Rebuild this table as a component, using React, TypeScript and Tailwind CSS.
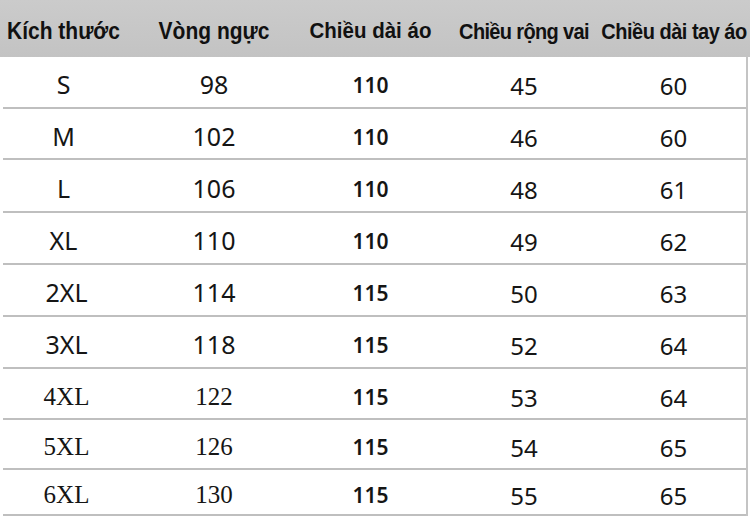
const COLS = [
  { label: "Kích thước", w: "w-[121px] shrink-0", head: "text-[21px]" },
  { label: "Vòng ngực", w: "w-[180px] shrink-0", head: "text-[21px]" },
  { label: "Chiều dài áo", w: "w-[133px] shrink-0", head: "text-[20.5px]" },
  { label: "Chiều rộng vai", w: "w-[174px] shrink-0", head: "text-[20px] tracking-[-0.65px]" },
  { label: "Chiều dài tay áo", w: "flex-1 min-w-0 pr-[10px]", head: "text-[20px] tracking-[-0.5px]" },
]

const SANS = "font-['Noto_Sans','Liberation_Sans',sans-serif] text-[25px]"
const SERIF = "font-['Liberation_Serif',serif] text-[25px]"
const BOLDNUM = "font-['Noto_Sans','Liberation_Sans',sans-serif] font-semibold text-[21px] pt-[7px]"
const NUM = "font-['Noto_Sans','Liberation_Sans',sans-serif] text-[24px] pt-[8px]"

type Row = {
  h: string
  size: string
  chest: string
  length: string
  shoulder: string
  sleeve: string
  serif?: boolean
}

const ROWS: Row[] = [
  { h: "h-[52px]", size: "S", chest: "98", length: "110", shoulder: "45", sleeve: "60" },
  { h: "h-[51px]", size: "M", chest: "102", length: "110", shoulder: "46", sleeve: "60" },
  { h: "h-[53px]", size: "L", chest: "106", length: "110", shoulder: "48", sleeve: "61" },
  { h: "h-[52px]", size: "XL", chest: "110", length: "110", shoulder: "49", sleeve: "62" },
  { h: "h-[52px]", size: "2XL", chest: "114", length: "115", shoulder: "50", sleeve: "63" },
  { h: "h-[52px]", size: "3XL", chest: "118", length: "115", shoulder: "52", sleeve: "64" },
  { h: "h-[51px]", size: "4XL", chest: "122", length: "115", shoulder: "53", sleeve: "64", serif: true },
  { h: "h-[50px]", size: "5XL", chest: "126", length: "115", shoulder: "54", sleeve: "65", serif: true },
  { h: "h-[46px]", size: "6XL", chest: "130", length: "115", shoulder: "55", sleeve: "65", serif: true },
]

function Cell({ w, className, children }: { w: string; className: string; children: React.ReactNode }) {
  return (
    <div className={`${w} flex items-center justify-center pt-[5px] leading-none text-[#151515] ${className}`}>
      {children}
    </div>
  )
}

export default function App() {
  return (
    <div className="w-[750px] h-[519px] overflow-hidden bg-white">
      {/* header */}
      <div className="h-[57px] flex bg-gradient-to-b from-[#cbcbcb] to-[#c3c3c3] px-[3px]">
        {COLS.map((c) => (
          <div
            key={c.label}
            className={`${c.w} flex items-center justify-center pt-[4px] whitespace-nowrap font-['Liberation_Sans',Arial,sans-serif] font-bold text-[#111] ${c.head}`}
          >
            <span className="inline-block scale-y-[1.1]">{c.label}</span>
          </div>
        ))}
      </div>

      {/* body */}
      <div className="ml-[3px] w-[745px] border-r-[2px] border-[#c4c4c4]">
        {ROWS.map((r) => (
          <div key={r.size} className={`${r.h} flex border-b-[2px] border-[#bfbfbf]`}>
            <Cell w={COLS[0].w} className={`${r.serif ? SERIF : SANS} ${r.size.length > 2 ? "pl-[6px]" : ""}`}>{r.size}</Cell>
            <Cell w={COLS[1].w} className={r.serif ? SERIF : SANS}>{r.chest}</Cell>
            <Cell w={COLS[2].w} className={BOLDNUM}>{r.length}</Cell>
            <Cell w={COLS[3].w} className={NUM}>{r.shoulder}</Cell>
            <Cell w={COLS[4].w} className={NUM}>{r.sleeve}</Cell>
          </div>
        ))}
      </div>
    </div>
  )
}
